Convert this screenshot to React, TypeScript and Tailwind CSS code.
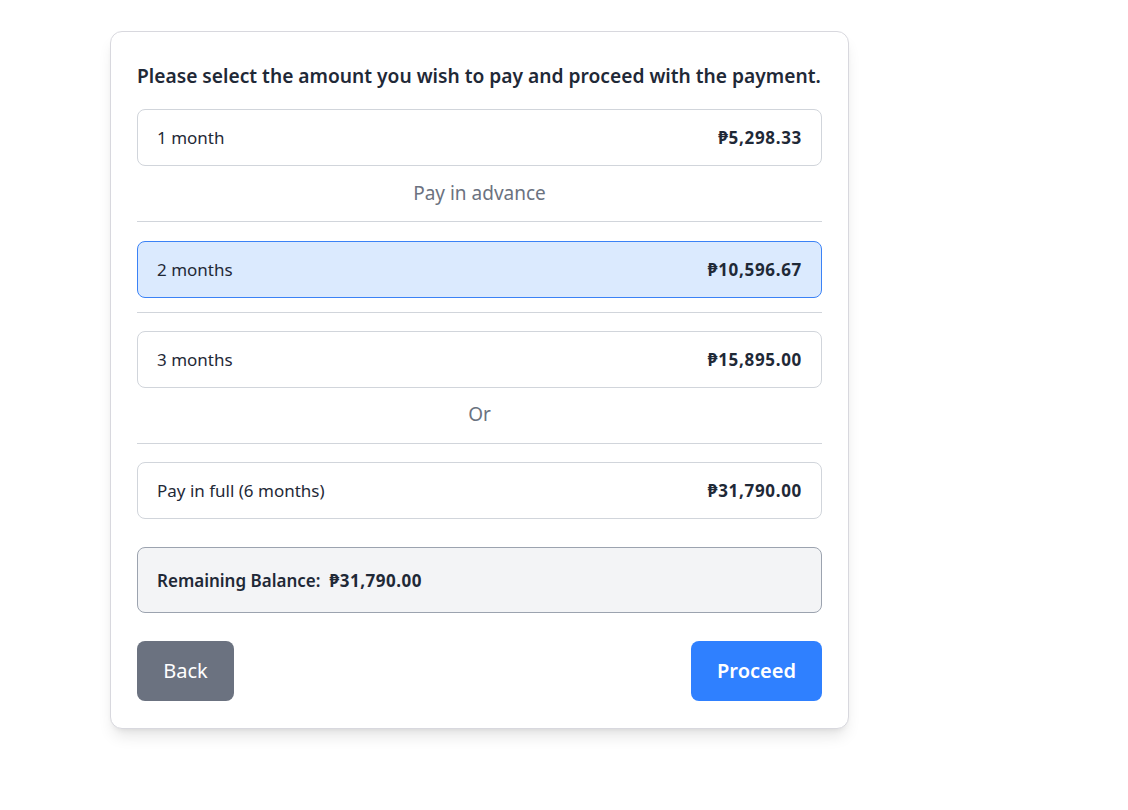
import React, { useState } from "react";

interface Option {
  label: string;
  amount: string;
}

const advance: Option[] = [
  { label: "2 months", amount: "₱10,596.67" },
  { label: "3 months", amount: "₱15,895.00" },
];

function OptionRow({
  option,
  selected,
  onClick,
}: {
  option: Option;
  selected: boolean;
  onClick: () => void;
}) {
  return (
    <div
      onClick={onClick}
      className={
        selected
          ? "flex items-center justify-between h-[57px] pl-[19px] pr-[19px] rounded-lg border border-[#3b82f6] bg-[#dbeafe] cursor-pointer"
          : "flex items-center justify-between h-[57px] pl-[19px] pr-[19px] rounded-lg border border-[#d1d5db] bg-white cursor-pointer"
      }
    >
      <span className="text-[17px] text-[#1f2937] pt-px">{option.label}</span>
      <span className="text-[17px] font-bold tracking-[0.04em] text-[#1f2937] pt-px">
        {option.amount}
      </span>
    </div>
  );
}

export default function App() {
  const [selected, setSelected] = useState("2 months");

  return (
    <div
      className="min-h-screen bg-white"
      style={{ fontFamily: '"Noto Sans", "Open Sans", sans-serif' }}
    >
      <div className="pl-[110px] pt-[31px]">
        <div className="w-[739px] rounded-xl border border-[#d8d8de] bg-white shadow-lg px-[26px] pt-[30px] pb-[27px]">
          <h2 className="text-[19.2px] font-semibold text-[#1f2937] leading-7 mb-[19px] whitespace-nowrap">
            Please select the amount you wish to pay and proceed with the payment.
          </h2>

          <OptionRow
            option={{ label: "1 month", amount: "₱5,298.33" }}
            selected={selected === "1 month"}
            onClick={() => setSelected("1 month")}
          />

          <p className="text-center text-[19px] text-[#6b7280] leading-7 mt-[13px] pb-[14px] border-b border-[#d1d5db]">
            Pay in advance
          </p>

          <div className="mt-[19px]">
            <OptionRow
              option={advance[0]}
              selected={selected === advance[0].label}
              onClick={() => setSelected(advance[0].label)}
            />
          </div>
          <div className="mt-[14px] border-t border-[#d1d5db]"></div>
          <div className="mt-[18px]">
            <OptionRow
              option={advance[1]}
              selected={selected === advance[1].label}
              onClick={() => setSelected(advance[1].label)}
            />
          </div>

          <p className="text-center text-[19px] text-[#6b7280] leading-7 mt-[12px] pb-[15px] border-b border-[#d1d5db]">
            Or
          </p>

          <div className="mt-[18px]">
            <OptionRow
              option={{ label: "Pay in full (6 months)", amount: "₱31,790.00" }}
              selected={selected === "full"}
              onClick={() => setSelected("full")}
            />
          </div>

          <div className="mt-[28px] h-[66px] flex items-center gap-[9px] pl-[19px] pr-5 rounded-lg border border-[#9ca3af] bg-[#f3f4f6]">
            <span className="text-[17px] font-semibold text-[#1f2937] pt-px">
              Remaining Balance:
            </span>
            <span className="text-[17px] font-bold tracking-[0.03em] text-[#1f2937] pt-px">
              ₱31,790.00
            </span>
          </div>

          <div className="mt-[28px] flex items-center justify-between">
            <button className="h-[60px] w-[97px] rounded-lg bg-[#6b7280] text-white text-xl">
              Back
            </button>
            <button className="h-[60px] w-[131px] rounded-lg bg-[#2f80ff] text-white text-xl font-semibold">
              Proceed
            </button>
          </div>
        </div>
      </div>
    </div>
  );
}
